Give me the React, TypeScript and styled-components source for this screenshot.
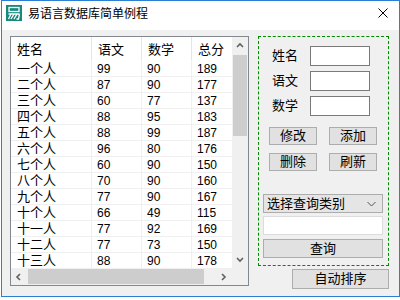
import styled, { createGlobalStyle } from 'styled-components';

const GlobalStyle = createGlobalStyle`
  html, body {
    margin: 0;
    padding: 0;
    background: #fff;
  }
  body {
    font-family: "Liberation Sans", "Noto Sans CJK SC", sans-serif;
    color: #000;
  }
`;

const rows = [
  ['一个人', 99, 90, 189],
  ['二个人', 87, 90, 177],
  ['三个人', 60, 77, 137],
  ['四个人', 88, 95, 183],
  ['五个人', 88, 99, 187],
  ['六个人', 96, 80, 176],
  ['七个人', 60, 90, 150],
  ['八个人', 70, 90, 160],
  ['九个人', 77, 90, 167],
  ['十个人', 66, 49, 115],
  ['十一人', 77, 92, 169],
  ['十二人', 77, 73, 150],
  ['十三人', 88, 90, 178],
];

const columns = [
  { title: '姓名', width: 81 },
  { title: '语文', width: 50 },
  { title: '数学', width: 50 },
  { title: '总分', width: 60 },
];

const Window = styled.div`
  margin-left: 1px;
  width: 399px;
  height: 297px;
  box-sizing: border-box;
  border: 1px solid #2b7fd4;
  background: #f0f0f0;
  display: flex;
  flex-direction: column;
`;

const TitleBar = styled.div`
  height: 29px;
  background: #fff;
  display: flex;
  align-items: flex-start;
  padding: 4px 11px 0 4px;
  box-sizing: border-box;
`;

const TitleText = styled.div`
  margin-left: 6px;
  margin-top: 1px;
  font-size: 12px;
  line-height: 16px;
  flex: 1;
`;

const CloseBox = styled.div`
  margin-top: 3px;
  width: 10px;
  height: 10px;
  display: flex;
`;

const Body = styled.div`
  flex: 1;
  display: flex;
  gap: 9px;
  padding: 6px 10px 0 8px;
`;

const ListBox = styled.div`
  width: 239px;
  height: 250px;
  box-sizing: border-box;
  border: 1px solid #828790;
  background: #fff;
  display: grid;
  grid-template-columns: 1fr 16px;
  grid-template-rows: 1fr 17px;
`;

const TableClip = styled.div`
  overflow: hidden;
`;

const Row = styled.div<{ $header?: boolean }>`
  display: flex;
  height: ${(p) => (p.$header ? 24 : 16)}px;
`;

const Cell = styled.div<{ $w: number; $header?: boolean }>`
  flex: 0 0 ${(p) => p.$w}px;
  box-sizing: border-box;
  padding: ${(p) => (p.$header ? '3px 0 0 6px' : '0 0 0 5px')};
  font-size: ${(p) => (p.$header ? 13 : 12)}px;
  line-height: ${(p) => (p.$header ? 20 : 16)}px;
  border-right: 1px solid ${(p) => (p.$header ? '#e5e5e5' : '#f0f0f0')};
  border-bottom: 1px solid ${(p) => (p.$header ? 'transparent' : '#f0f0f0')};
  white-space: nowrap;
`;

const NameCell = styled(Cell)`
  padding-left: 6px;
  font-size: 13px;
`;

const VScroll = styled.div`
  background: #f0f0f0;
  display: flex;
  flex-direction: column;
`;

const HScroll = styled.div`
  background: #f0f0f0;
  display: flex;
`;

const Corner = styled.div`
  background: #f0f0f0;
`;

const Arrow = styled.div<{ $vertical?: boolean }>`
  flex: 0 0 ${(p) => (p.$vertical ? 17 : 16)}px;
  display: flex;
  align-items: center;
  justify-content: center;
`;

const Thumb = styled.div<{ $vertical?: boolean; $size: number }>`
  background: #cdcdcd;
  ${(p) =>
    p.$vertical
      ? `height: ${p.$size}px; margin: 1px 1px 0 1px;`
      : `width: ${p.$size}px; margin: 1px 0 1px 1px;`}
`;

const Spacer = styled.div`
  flex: 1;
`;

const RightColumn = styled.div`
  width: 131px;
  display: flex;
  flex-direction: column;
`;

const Group = styled.div`
  height: 230px;
  box-sizing: border-box;
  border: 1px dashed #008a00;
  display: flex;
  flex-direction: column;
  padding: 9px 0 0 0;
`;

const FormGrid = styled.div`
  display: grid;
  grid-template-columns: 38px 60px;
  grid-auto-rows: 20px;
  row-gap: 5px;
  padding-left: 13px;
`;

const Label = styled.div`
  font-size: 13px;
  line-height: 20px;
`;

const Input = styled.div<{ $light?: boolean }>`
  box-sizing: border-box;
  background: #fff;
  border: 1px solid ${(p) => (p.$light ? '#dcdcdc' : '#7a7a7a')};
`;

const ButtonGrid = styled.div`
  display: grid;
  grid-template-columns: 48px 48px;
  grid-auto-rows: 18px;
  column-gap: 12px;
  row-gap: 8px;
  margin: 11px 0 0 10px;
`;

const Button = styled.div<{ $w?: number; $h?: number }>`
  box-sizing: border-box;
  ${(p) => (p.$w ? `width: ${p.$w}px;` : '')}
  height: ${(p) => p.$h ?? 18}px;
  background: #e1e1e1;
  border: 1px solid #adadad;
  font-size: 13px;
  line-height: ${(p) => (p.$h ?? 18) - 2}px;
  text-align: center;
`;

const QueryBox = styled.div`
  display: flex;
  flex-direction: column;
  width: 120px;
  margin: 23px 0 0 4px;
`;

const Combo = styled.div`
  height: 19px;
  box-sizing: border-box;
  background: #e5e5e5;
  border: 1px solid #acacac;
  display: flex;
  align-items: center;
  padding: 0 6px 0 3px;
  font-size: 13px;
  line-height: 17px;
`;

const ComboText = styled.span`
  flex: 1;
`;

const QueryInput = styled(Input)`
  height: 19px;
  margin-top: 3px;
`;

const QueryButton = styled(Button)`
  margin-top: 4px;
`;

const SortButton = styled(Button)`
  align-self: flex-end;
  margin-top: 3px;
`;

const Chevron = ({ dir }: { dir: 'up' | 'down' | 'left' | 'right' }) => {
  const pts = {
    up: '1,5 4,2 7,5',
    down: '1,2 4,5 7,2',
    left: '5,1 2,4 5,7',
    right: '2,1 5,4 2,7',
  }[dir];
  return (
    <svg width="8" height="8" viewBox="0 0 8 8">
      <polyline points={pts} fill="none" stroke="#606060" strokeWidth="1.6" />
    </svg>
  );
};

const AppIcon = () => (
  <svg width="16" height="16" viewBox="0 0 16 16">
    <rect x="0" y="0" width="16" height="16" fill="#178a7c" />
    <rect x="3" y="2.5" width="10" height="4" fill="none" stroke="#fff" strokeWidth="1.3" />
    <path d="M2.5 9 H13.5 M5 9 L2.5 14 M8 9 L5 14 M11 9 L8 14 M13.5 9 L12.5 14 L10.5 14" fill="none" stroke="#fff" strokeWidth="1.3" />
  </svg>
);

export default function App() {
  return (
    <>
      <GlobalStyle />
      <Window>
        <TitleBar>
          <AppIcon />
          <TitleText>易语言数据库简单例程</TitleText>
          <CloseBox>
            <svg width="10" height="10" viewBox="0 0 10 10">
              <path d="M0.5 0.5 L9.5 9.5 M9.5 0.5 L0.5 9.5" stroke="#000" strokeWidth="1" />
            </svg>
          </CloseBox>
        </TitleBar>
        <Body>
          <ListBox>
            <TableClip>
              <Row $header>
                {columns.map((c) => (
                  <Cell key={c.title} $w={c.width} $header>
                    {c.title}
                  </Cell>
                ))}
              </Row>
              {rows.map((r) => (
                <Row key={r[0] as string}>
                  <NameCell $w={columns[0].width}>{r[0]}</NameCell>
                  <Cell $w={columns[1].width}>{r[1]}</Cell>
                  <Cell $w={columns[2].width}>{r[2]}</Cell>
                  <Cell $w={columns[3].width}>{r[3]}</Cell>
                </Row>
              ))}
            </TableClip>
            <VScroll>
              <Arrow $vertical>
                <Chevron dir="up" />
              </Arrow>
              <Thumb $vertical $size={81} />
              <Spacer />
              <Arrow $vertical>
                <Chevron dir="down" />
              </Arrow>
            </VScroll>
            <HScroll>
              <Arrow>
                <Chevron dir="left" />
              </Arrow>
              <Thumb $size={176} />
              <Spacer />
              <Arrow>
                <Chevron dir="right" />
              </Arrow>
            </HScroll>
            <Corner />
          </ListBox>
          <RightColumn>
            <Group>
              <FormGrid>
                <Label>姓名</Label>
                <Input />
                <Label>语文</Label>
                <Input />
                <Label>数学</Label>
                <Input />
              </FormGrid>
              <ButtonGrid>
                <Button>修改</Button>
                <Button>添加</Button>
                <Button>删除</Button>
                <Button>刷新</Button>
              </ButtonGrid>
              <QueryBox>
                <Combo>
                  <ComboText>选择查询类别</ComboText>
                  <svg width="9" height="6" viewBox="0 0 9 6">
                    <polyline points="0.5,1 4.5,5 8.5,1" fill="none" stroke="#555" strokeWidth="1" />
                  </svg>
                </Combo>
                <QueryInput $light />
                <QueryButton $h={19}>查询</QueryButton>
              </QueryBox>
            </Group>
            <SortButton $w={97} $h={20}>
              自动排序
            </SortButton>
          </RightColumn>
        </Body>
      </Window>
    </>
  );
}
